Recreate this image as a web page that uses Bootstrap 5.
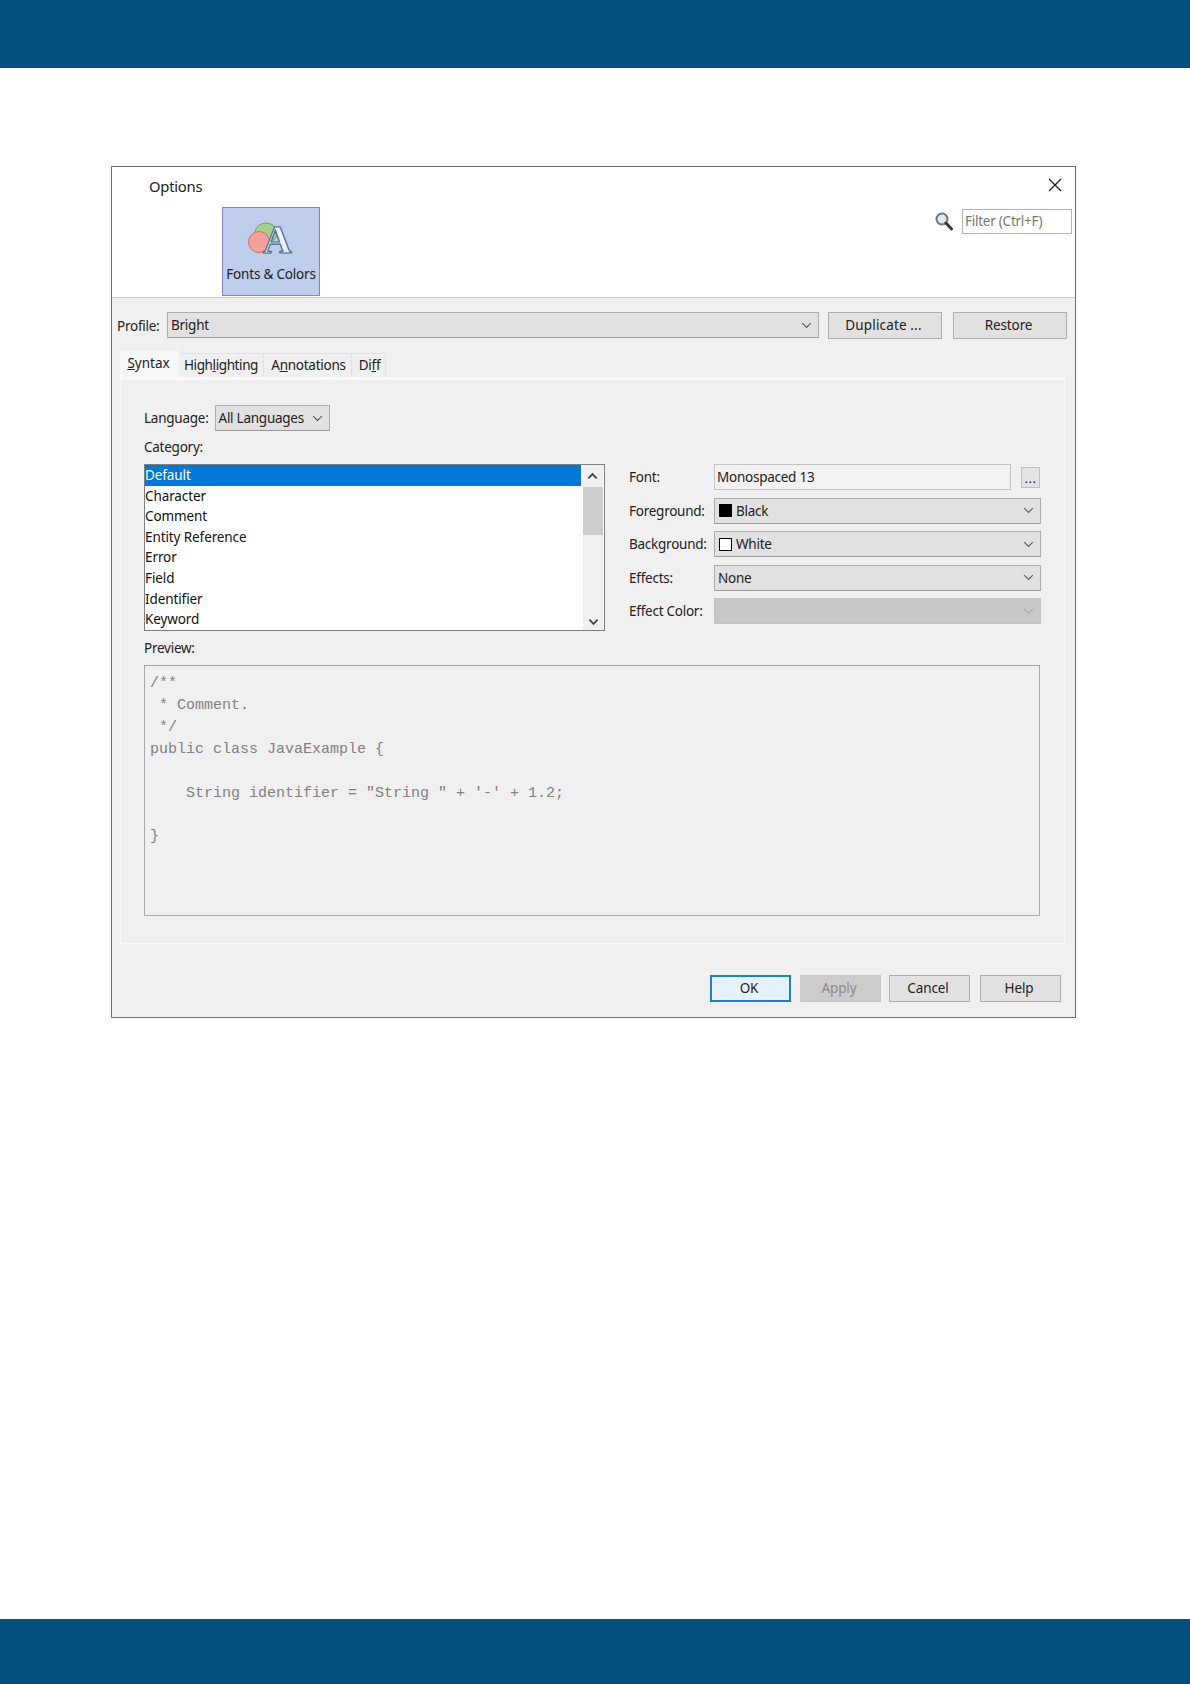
<!DOCTYPE html>
<html lang="en">
<head>
<meta charset="utf-8">
<title>Options</title>
<link rel="stylesheet" href="https://cdn.jsdelivr.net/npm/bootstrap@5.3.0/dist/css/bootstrap.min.css">
<script src="https://cdn.jsdelivr.net/npm/bootstrap@5.3.0/dist/js/bootstrap.bundle.min.js"></script>
<style>
html,body{margin:0;background:#fff;}
body{font-family:"Noto Sans","Open Sans",sans-serif;font-size:13.5px;letter-spacing:-.25px;color:#222;line-height:20px;}
.page-wrap{height:1684px;}
.band-top{height:68px;background:#04507f;}
.band-bottom{height:65px;background:#04507f;}
.dlg{width:965px;height:852px;margin:98px 0 0 111px;border:1px solid #6e6e6e;background:#f0f0f0;}
.dlg-head{height:131px;background:#fff;border-bottom:1px solid #c8c8c8;}
.dlg-title{margin-left:37px;height:38px;font-size:14.8px;}
.tile{width:98px;height:89px;margin:2px 0 0 110px;background:#bdcdec;border:1px solid #8e7ad8;padding-top:1px;}
.tile-icon{display:block;margin:0 auto;}
.tile-label{letter-spacing:-.2px;}
.close-x{width:16px;height:16px;margin:10px 12px 0 0;}
.filter-row{margin:16px 3px 0 0;gap:9px;}
.filter-box{width:110px;height:25px;background:#fff;border:1px solid #b4b4b4;color:#777;padding-left:2px;line-height:23px;}
.profile-row{padding:14px 8px 0 5px;}
.lbl-profile{width:50px;}
.combo{height:26px;background:#e1e1e1;border:1px solid #adadad;border-bottom-color:#999;padding:0 6px 0 3px;line-height:24px;color:#222;}
.combo-dis{background:#c8c8c8;border-color:#c4c4c4;}
.combo svg.chev{flex:none;}
.swatch{width:13px;height:13px;border:1px solid #000;margin:0 4px 0 1px;flex:none;}
.win-btn{width:114px;height:27px;padding:0 3px 0 0;border-radius:0;background:#e1e1e1;border:1px solid #adadad;font-size:13.5px;line-height:25px;color:#222;letter-spacing:-.1px;}
.win-btn:hover{background:#e1e1e1;border-color:#adadad;color:#222;}
.gap-dup{margin-left:9px;letter-spacing:.15px;}
.win-restore{margin-left:11px;}
.foot-btn{width:81px;}
.btn-ok,.btn-ok:hover{background:#e5f1fb;border:2px solid #1a80d6;line-height:23px;}
.btn-off,.btn-off:disabled{background:#cccccc;border-color:#c8c8c8;color:#8a8a8a;opacity:1;}
.gap-apply{margin-left:9px;}
.gap-cancel{margin-left:8px;}
.gap-help{margin-left:10px;}
.tab-strip{margin:12px 0 0 8px;height:26px;align-items:flex-end;}
.win-tab.nav-link{padding:0;height:24px;line-height:23px;color:#222;background:#f0f0f0;border:1px solid #e2e2e2;border-bottom:0;border-left:0;text-align:center;}
.win-tab.active{height:26px;background:#f7f7f7;border:0;line-height:24px;padding-right:2px;letter-spacing:0;}
.tab-a{width:59px;}.tab-b{width:85px;letter-spacing:-.4px;}.tab-c{width:88px;padding-left:2px !important;}.tab-d{width:34px;padding-left:2px !important;}
.tab-panel{margin:0 10px 0 8px;height:567px;border:1px solid #fafafa;border-top-width:3px;padding:25px 0 0 23px;}
.lang-combo{width:115px;margin-left:6px;}
.lbl-cat{margin-top:6px;}
.list-frame{width:461px;height:167px;margin-top:7px;background:#fff;border:1px solid #808080;}
.list-rows{width:436px;}
.list-row{height:20.6px;line-height:20.6px;color:#111;letter-spacing:-.1px;}
.list-row.sel{background:#0078d7;color:#fff;}
.scroll-col{width:20px;background:#f0f0f0;padding-top:22px;margin-left:2px;}
.scroll-thumb{height:48px;background:#cdcdcd;}
.scroll-up{top:7px;left:4px;}
.form-col{margin:7px 0 0 24px;width:412px;gap:7.5px;}
.form-lbl{width:85px;flex:none;}
.font-lbl{height:26px;}
.font-box{width:297px;height:26px;background:#f2f2f2;border:1px solid #c3c3c3;padding-left:2px;line-height:24px;}
.dots{width:19px;height:21px;margin:3px 0 0 10px;background:#e3e3e3;border:1px solid #c0c0c0;text-align:center;line-height:20px;font-size:13px;letter-spacing:.5px;}
.combo-wide{width:327px;}
.lbl-prev{margin-top:7px;}
.code-box{width:896px;height:251px;margin:7px 0 0 0;background:#f0f0f0;border:1px solid #a9a9a9;padding:7px 5px;font-family:"Liberation Mono",monospace;font-size:15px;line-height:21.9px;letter-spacing:0;color:#808080;white-space:pre;}
.foot-row{margin-top:31px;padding-right:14px;}
</style>
</head>
<body>
<div class="page-wrap d-flex flex-column">
  <div class="band-top"></div>
  <div class="dlg">
    <div class="dlg-head d-flex justify-content-between">
      <div>
        <div class="dlg-title d-flex align-items-center">Options</div>
        <div class="tile text-center">
          <svg class="tile-icon" width="46" height="55" viewBox="0 0 46 55">
            <defs><linearGradient id="glyphFill" x1="0" y1="0" x2="0" y2="1"><stop offset="0" stop-color="#ffffff"/><stop offset="1" stop-color="#dbe6f0"/></linearGradient></defs>
            <ellipse cx="18" cy="24" rx="11" ry="10" fill="#a6cf8c" stroke="#7c9e6e"/>
            <circle cx="11" cy="33" r="10.5" fill="#f4a09a" stroke="#c8706c"/>
            <text x="29" y="44" text-anchor="middle" font-family="Liberation Serif,serif" font-weight="700" font-size="40" fill="url(#glyphFill)" stroke="#466a88" stroke-width="1.2">A</text>
          </svg>
          <div class="tile-label">Fonts &amp; Colors</div>
        </div>
      </div>
      <div class="d-flex flex-column align-items-end">
        <svg class="close-x" viewBox="0 0 16 16"><path d="M2 2 L14 14 M14 2 L2 14" stroke="#222" stroke-width="1.3" fill="none"/></svg>
        <div class="filter-row d-flex align-items-center">
          <svg width="18" height="19" viewBox="0 0 18 19"><circle cx="7" cy="7" r="5.5" fill="#dfe8f0" stroke="#6b7780" stroke-width="2"/><path d="M11 11 L16.5 17" stroke="#3c3c3c" stroke-width="3" stroke-linecap="round"/></svg>
          <div class="filter-box">Filter (Ctrl+F)</div>
        </div>
      </div>
    </div>

    <div class="profile-row d-flex">
      <div class="lbl-profile d-flex align-items-center">Profile:</div>
      <div class="combo d-flex align-items-center justify-content-between flex-grow-1">
        <span>Bright</span>
        <svg class="chev" width="11" height="7" viewBox="0 0 14 8"><path d="M1.5 1 L7 6.5 L12.5 1" stroke="#555" stroke-width="1.4" fill="none"/></svg>
      </div>
      <button class="btn win-btn gap-dup">Duplicate ...</button>
      <button class="btn win-btn win-restore">Restore</button>
    </div>

    <ul class="nav tab-strip d-flex">
      <li class="nav-item"><a class="nav-link win-tab active tab-a" href="#"><u>S</u>yntax</a></li>
      <li class="nav-item"><a class="nav-link win-tab tab-b" href="#">High<u>l</u>ighting</a></li>
      <li class="nav-item"><a class="nav-link win-tab tab-c" href="#">A<u>n</u>notations</a></li>
      <li class="nav-item"><a class="nav-link win-tab tab-d" href="#">Di<u>f</u>f</a></li>
    </ul>

    <div class="tab-panel">
      <div class="d-flex align-items-center">
        <span>Language:</span>
        <div class="combo lang-combo d-flex align-items-center justify-content-between">
          <span>All Languages</span>
          <svg class="chev" width="11" height="7" viewBox="0 0 14 8"><path d="M1.5 1 L7 6.5 L12.5 1" stroke="#555" stroke-width="1.4" fill="none"/></svg>
        </div>
      </div>
      <div class="lbl-cat">Category:</div>
      <div class="d-flex">
        <div class="list-frame d-flex">
          <div class="list-rows">
            <div class="list-row sel">Default</div>
            <div class="list-row">Character</div>
            <div class="list-row">Comment</div>
            <div class="list-row">Entity Reference</div>
            <div class="list-row">Error</div>
            <div class="list-row">Field</div>
            <div class="list-row">Identifier</div>
            <div class="list-row">Keyword</div>
          </div>
          <div class="scroll-col d-flex flex-column position-relative">
            <div class="scroll-thumb"></div>
            <svg class="mt-auto mb-1 mx-auto" width="11" height="8" viewBox="0 0 12 8"><path d="M1.5 1.5 L6 6 L10.5 1.5" stroke="#444" stroke-width="2" fill="none"/></svg>
            <svg class="scroll-up position-absolute" width="11" height="8" viewBox="0 0 12 8"><path d="M1.5 6.5 L6 2 L10.5 6.5" stroke="#444" stroke-width="2" fill="none"/></svg>
          </div>
        </div>
        <div class="form-col d-flex flex-column">
          <div class="d-flex align-items-start">
            <div class="form-lbl d-flex align-items-center font-lbl">Font:</div>
            <div class="font-box">Monospaced 13</div>
            <div class="dots">...</div>
          </div>
          <div class="d-flex align-items-center">
            <div class="form-lbl">Foreground:</div>
            <div class="combo combo-wide d-flex align-items-center">
              <span class="swatch bg-black"></span><span>Black</span>
              <svg class="chev ms-auto" width="11" height="7" viewBox="0 0 14 8"><path d="M1.5 1 L7 6.5 L12.5 1" stroke="#555" stroke-width="1.4" fill="none"/></svg>
            </div>
          </div>
          <div class="d-flex align-items-center">
            <div class="form-lbl">Background:</div>
            <div class="combo combo-wide d-flex align-items-center">
              <span class="swatch bg-white"></span><span>White</span>
              <svg class="chev ms-auto" width="11" height="7" viewBox="0 0 14 8"><path d="M1.5 1 L7 6.5 L12.5 1" stroke="#555" stroke-width="1.4" fill="none"/></svg>
            </div>
          </div>
          <div class="d-flex align-items-center">
            <div class="form-lbl">Effects:</div>
            <div class="combo combo-wide d-flex align-items-center">
              <span>None</span>
              <svg class="chev ms-auto" width="11" height="7" viewBox="0 0 14 8"><path d="M1.5 1 L7 6.5 L12.5 1" stroke="#555" stroke-width="1.4" fill="none"/></svg>
            </div>
          </div>
          <div class="d-flex align-items-center">
            <div class="form-lbl">Effect Color:</div>
            <div class="combo combo-dis combo-wide d-flex align-items-center">
              <svg class="chev ms-auto" width="11" height="7" viewBox="0 0 14 8"><path d="M1.5 1 L7 6.5 L12.5 1" stroke="#aaa" stroke-width="1.4" fill="none"/></svg>
            </div>
          </div>
        </div>
      </div>
      <div class="lbl-prev">Preview:</div>
      <pre class="code-box">/**
 * Comment.
 */
public class JavaExample {

    String identifier = "String " + '-' + 1.2;

}</pre>
    </div>

    <div class="foot-row d-flex justify-content-end">
      <button class="btn win-btn foot-btn btn-ok">OK</button>
      <button class="btn win-btn foot-btn btn-off gap-apply" disabled>Apply</button>
      <button class="btn win-btn foot-btn gap-cancel">Cancel</button>
      <button class="btn win-btn foot-btn gap-help">Help</button>
    </div>
  </div>
  <div class="band-bottom mt-auto"></div>
</div>
</body>
</html>
